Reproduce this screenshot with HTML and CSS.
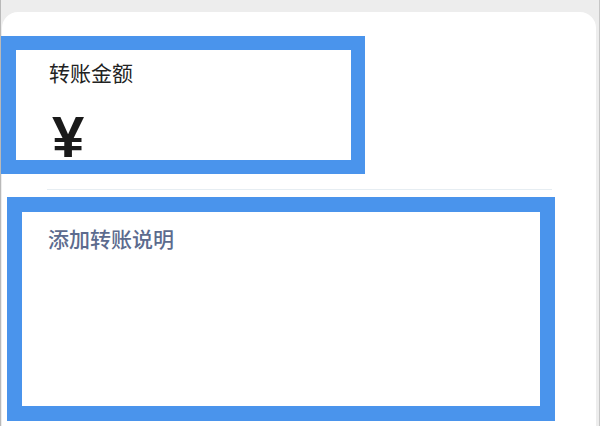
FILE: index.html
```html
<!DOCTYPE html>
<html lang="zh">
<head>
<meta charset="utf-8">
<title>转账</title>
<link rel="stylesheet" href="styles.css">
</head>
<body>
<div class="page">
  <div class="card">
    <div class="amount-box">
      <div class="label">转账金额</div>
      <div class="yen">¥</div>
    </div>
    <div class="divider"></div>
    <div class="note-box">
      <div class="note">添加转账说明</div>
    </div>
  </div>
</div>
</body>
</html>
```
FILE: styles.css
```css
html, body {
  margin: 0;
  padding: 0;
}
body {
  width: 600px;
  height: 426px;
  overflow: hidden;
  background: #ededed;
  font-family: "Noto Sans CJK SC", "Noto Sans", sans-serif;
}
.page {
  box-sizing: border-box;
  height: 426px;
  padding: 12px 3px 0 1px;
  border-left: 1px solid #b9b9b9;
  border-right: 1px solid #c6c6c6;
  display: flex;
  flex-direction: column;
}
.card {
  flex: 1;
  background: #ffffff;
  border-radius: 16px 16px 0 0;
  display: flex;
  flex-direction: column;
  align-items: flex-start;
}
.amount-box {
  box-sizing: border-box;
  width: 364px;
  height: 138px;
  margin: 24px 0 0 -1px;
  border: 14px solid #4a94ec;
  border-left-width: 15px;
  padding: 8px 0 0 33px;
  background: #fff;
}
.label {
  font-size: 21px;
  line-height: 28px;
  color: #222222;
}
.yen {
  margin: 22px 0 0 3px;
  font-family: "Liberation Sans", Arial, sans-serif;
  font-weight: bold;
  font-size: 58px;
  line-height: 58px;
  height: 51px;
  overflow: visible;
  color: #1a1a1a;
}
.divider {
  width: 505px;
  height: 1px;
  margin: 15px 0 0 45px;
  background: #e6edf2;
}
.note-box {
  box-sizing: border-box;
  width: 548px;
  height: 224px;
  margin: 7px 0 0 5px;
  border: 15px solid #4a94ec;
  padding: 12px 0 0 26px;
  background: #fff;
}
.note {
  font-size: 21px;
  line-height: 28px;
  font-weight: 500;
  color: #5c6b8e;
}
```
